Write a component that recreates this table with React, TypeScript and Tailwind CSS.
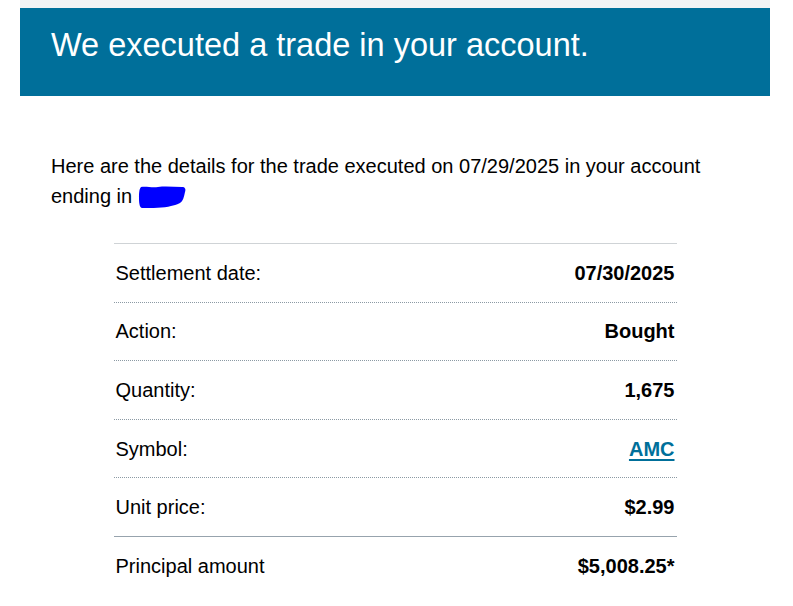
import React from "react";

const rows: { label: string; value: React.ReactNode; last?: boolean }[] = [
  { label: "Settlement date:", value: "07/30/2025" },
  { label: "Action:", value: "Bought" },
  { label: "Quantity:", value: "1,675" },
  {
    label: "Symbol:",
    value: (
      <a href="#" className="text-[#006f9a] underline decoration-2 underline-offset-[3px]">
        AMC
      </a>
    ),
  },
  { label: "Unit price:", value: "$2.99", last: true },
];

export default function App() {
  return (
    <div className="min-h-[606px] bg-white" style={{ fontFamily: '"Liberation Sans", Arial, sans-serif' }}>
      <div className="mx-[20px] w-[750px]">
        <div className="h-[8px] bg-[#f2f3f5]" />
        <div className="h-[88px] bg-[#006f9a] px-[31px] pt-[17px]">
          <h1 className="text-[32.5px] leading-[40px] text-white">We executed a trade in your account.</h1>
        </div>
        <div className="px-[31px] pt-[55px]">
          <p className="text-[20px] leading-[30px] text-black">
            Here are the details for the trade executed on 07/29/2025 in your account ending in{" "}
            <svg width="48" height="28" viewBox="0 0 48 28" className="inline-block align-[-9px]">
              <path
                d="M3 3 C8 2 14 4 20 3 C28 2 36 3 44 3 C47 3 48 5 47 8 C46 13 45 17 42 19 C38 21 36 21 33 22 C26 24 14 24 4 24 C2 24 1 20 1 15 C1 10 1 5 3 3 Z"
                fill="#0000ff"
              />
            </svg>
          </p>
          <div className="mx-auto mt-[31px] w-[563px] border-t border-[#cfd3d6]">
            {rows.map((r) => (
              <div
                key={r.label}
                className={`flex h-[58.6px] items-center justify-between px-[2px] text-[20px] text-black ${
                  r.last ? "border-b border-solid border-[#97a3ad]" : "border-b border-dotted border-[#8c9aa4]"
                }`}
              >
                <span>{r.label}</span>
                <span className="font-bold">{r.value}</span>
              </div>
            ))}
            <div className="flex h-[58.6px] items-center justify-between px-[2px] text-[20px] text-black">
              <span>Principal amount</span>
              <span className="font-bold">$5,008.25*</span>
            </div>
          </div>
        </div>
      </div>
    </div>
  );
}
